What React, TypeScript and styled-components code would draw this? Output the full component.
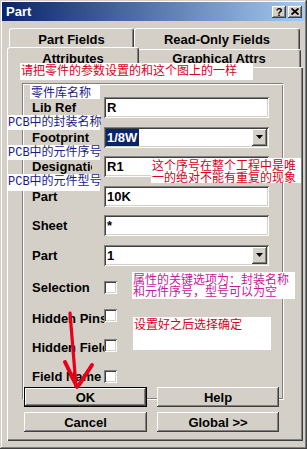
import React from 'react';
import styled, { createGlobalStyle, css } from 'styled-components';

const ui = `"Liberation Sans", Arial, sans-serif`;
const cjk = `"Noto Sans CJK SC", "Liberation Sans", sans-serif`;
const mixed = `"Liberation Mono", "Noto Sans CJK SC", monospace`;

const GlobalStyle = createGlobalStyle`
  html, body {
    margin: 0;
    padding: 0;
    background: #d4d0c8;
  }
  body {
    font-family: ${ui};
  }
`;

const Window = styled.div`
  position: relative;
  width: 307px;
  height: 449px;
  box-sizing: border-box;
  padding: 2px;
  background: #d4d0c8;
  box-shadow: inset -1px -1px #404040, inset 1px 1px #d4d0c8,
    inset -2px -2px #808080, inset 2px 2px #fff;
  display: flex;
  flex-direction: column;
  overflow: hidden;
`;

const TitleBar = styled.div`
  height: 19px;
  flex: none;
  display: flex;
  align-items: center;
  padding: 0 3px 0 4px;
  background: linear-gradient(90deg, #0a246a, #a6caf0);
  color: #fff;
  font: bold 13px ${ui};
`;

const Caption = styled.span`
  flex: 1;
`;

const CaptionButton = styled.div`
  width: 14px;
  height: 12px;
  margin-left: 2px;
  display: flex;
  align-items: center;
  justify-content: center;
  background: #d4d0c8;
  box-shadow: inset -1px -1px #404040, inset 1px 1px #fff, inset -2px -2px #808080;
  color: #000;
  font: bold 11px/12px ${ui};
`;

const Body = styled.div`
  flex: 1;
  display: flex;
  flex-direction: column;
  padding: 7px 2px 6px 5px;
`;

const TabRow = styled.div<{ $h: number }>`
  display: flex;
  height: ${(p) => p.$h}px;
  padding: 0 2px;
  flex: none;
`;

const Tab = styled.div<{ $w: number; $active?: boolean }>`
  box-sizing: border-box;
  width: ${(p) => p.$w}px;
  flex: none;
  display: flex;
  align-items: center;
  justify-content: center;
  background: #d4d0c8;
  border-top: 1px solid #fff;
  border-left: 1px solid #fff;
  border-right: 1px solid #404040;
  box-shadow: inset -1px 0 #808080;
  border-radius: 3px 3px 0 0;
  font: bold 13px ${ui};
  color: #000;
  ${(p) =>
    p.$active &&
    css`
      position: relative;
      z-index: 1;
      width: ${p.$w + 4}px;
      margin: -2px -2px -1px;
    `}
`;

const TabPage = styled.div`
  flex: 1;
  display: flex;
  flex-direction: column;
  padding: 16px 19px 0 15px;
  box-shadow: inset 1px 1px #fff, inset -1px -1px #404040, inset -2px -2px #808080;
`;

const GroupBox = styled.div`
  box-sizing: border-box;
  height: 317px;
  padding: 13px 12px 0 9px;
  border: 1px solid;
  border-color: #808080 #fff #fff #808080;
  box-shadow: inset 1px 1px #fff, inset -1px -1px #808080;
`;

const FieldGrid = styled.div`
  display: grid;
  grid-template-columns: 72px 165px;
  grid-auto-rows: 21px;
  row-gap: 8.5px;
`;

const FieldLabel = styled.div<{ $clip: number }>`
  max-width: ${(p) => p.$clip}px;
  overflow: hidden;
  white-space: nowrap;
  font: bold 13px/21px ${ui};
  color: #000;
`;

const TextBox = styled.div`
  box-sizing: border-box;
  height: 21px;
  display: flex;
  align-items: center;
  padding: 0 3px;
  background: #fff;
  box-shadow: inset 1px 1px #808080, inset -1px -1px #fff, inset 2px 2px #404040,
    inset -2px -2px #d4d0c8;
  font: bold 13px ${ui};
  color: #000;
`;

const ComboBox = styled(TextBox)`
  padding: 2px 2px 2px 2px;
`;

const ComboText = styled.span<{ $selected?: boolean }>`
  height: 17px;
  line-height: 17px;
  padding: 0 2px 0 1px;
  ${(p) =>
    p.$selected &&
    css`
      background: #0a246a;
      color: #fff;
    `}
`;

const DropButton = styled.div`
  margin-left: auto;
  width: 15px;
  height: 17px;
  display: flex;
  align-items: center;
  justify-content: center;
  background: #d4d0c8;
  box-shadow: inset -1px -1px #404040, inset 1px 1px #fff, inset -2px -2px #808080;
`;

const CheckRow = styled.div<{ $h: number }>`
  display: flex;
  align-items: center;
  height: ${(p) => p.$h}px;
`;

const CheckList = styled.div`
  margin-top: 6px;
`;

const CheckLabel = styled.div`
  width: 72px;
  flex: none;
  overflow: hidden;
  white-space: nowrap;
  font: bold 13px/15px ${ui};
  color: #000;
`;

const CheckBox = styled.div<{ $lift: number }>`
  width: 13px;
  height: 13px;
  flex: none;
  margin-bottom: ${(p) => p.$lift * 2}px;
  background: #fff;
  box-shadow: inset 1px 1px #808080, inset -1px -1px #fff, inset 2px 2px #404040,
    inset -2px -2px #d4d0c8;
`;

const ButtonGrid = styled.div`
  display: grid;
  grid-template-columns: 123px 122px;
  grid-auto-rows: 20px;
  column-gap: 10px;
  row-gap: 5px;
  margin: -13px 0 0 2px;
`;

const Button = styled.button<{ $default?: boolean }>`
  box-sizing: border-box;
  margin: 0;
  padding: 0;
  border: none;
  background: #d4d0c8;
  font: bold 13px ${ui};
  color: #000;
  box-shadow: inset -1px -1px #404040, inset 1px 1px #fff, inset -2px -2px #808080;
  ${(p) =>
    p.$default &&
    css`
      box-shadow: inset 0 0 0 1px #000, inset -2px -2px #404040, inset 2px 2px #fff,
        inset -3px -3px #808080;
    `}
`;

const Note = styled.div<{
  $x: number;
  $y: number;
  $w: number;
  $h: number;
  $color: string;
  $lh?: number;
  $mono?: boolean;
}>`
  position: absolute;
  z-index: 2;
  left: ${(p) => p.$x}px;
  top: ${(p) => p.$y}px;
  width: ${(p) => p.$w}px;
  height: ${(p) => p.$h}px;
  box-sizing: border-box;
  padding: 1px 0 0 1px;
  background: #fff;
  color: ${(p) => p.$color};
  font-family: ${(p) => (p.$mono ? mixed : cjk)};
  font-size: 12px;
  line-height: ${(p) => p.$lh ?? 12}px;
  white-space: nowrap;
`;

const Arrow = styled.svg`
  position: absolute;
  z-index: 3;
  left: 58px;
  top: 305px;
`;

const fields = [
  { label: 'Lib Ref', value: 'R' },
  { label: 'Footprint', value: '1/8W', combo: true, selected: true },
  { label: 'Designation', value: 'R1' },
  { label: 'Part', value: '10K' },
  { label: 'Sheet', value: '*' },
  { label: 'Part', value: '1', combo: true },
];

const checks = [
  { label: 'Selection', h: 32, lift: 0 },
  { label: 'Hidden Pins', h: 30, lift: 3 },
  { label: 'Hidden Fields', h: 28, lift: 2 },
  { label: 'Field Name', h: 30, lift: 0 },
];

const BLUE = '#1a1a8c';
const RED = '#d6001c';
const PINK = '#c8189c';

export default function App() {
  return (
    <Window>
      <GlobalStyle />
      <TitleBar>
        <Caption>Part</Caption>
        <CaptionButton>?</CaptionButton>
        <CaptionButton>
          <svg width="8" height="7" viewBox="0 0 8 7">
            <path d="M0.5 0.5 L7.5 6.5 M7.5 0.5 L0.5 6.5" stroke="#000" strokeWidth="1.8" />
          </svg>
        </CaptionButton>
      </TitleBar>
      <Body>
        <TabRow $h={21}>
          <Tab $w={125}>Part Fields</Tab>
          <Tab $w={166}>Read-Only Fields</Tab>
        </TabRow>
        <TabRow $h={18}>
          <Tab $w={128} $active>
            Attributes
          </Tab>
          <Tab $w={164}>Graphical Attrs</Tab>
        </TabRow>
        <TabPage>
          <GroupBox>
            <FieldGrid>
              {fields.map((f, i) => (
                <React.Fragment key={i}>
                  <FieldLabel $clip={60}>{f.label}</FieldLabel>
                  {f.combo ? (
                    <ComboBox>
                      <ComboText $selected={f.selected}>{f.value}</ComboText>
                      <DropButton>
                        <svg width="7" height="4" viewBox="0 0 7 4">
                          <path d="M0 0 H7 L3.5 4 Z" fill="#000" />
                        </svg>
                      </DropButton>
                    </ComboBox>
                  ) : (
                    <TextBox>{f.value}</TextBox>
                  )}
                </React.Fragment>
              ))}
            </FieldGrid>
            <CheckList>
              {checks.map((c) => (
                <CheckRow key={c.label} $h={c.h}>
                  <CheckLabel>{c.label}</CheckLabel>
                  <CheckBox $lift={c.lift} />
                </CheckRow>
              ))}
            </CheckList>
          </GroupBox>
          <ButtonGrid>
            <Button $default>OK</Button>
            <Button>Help</Button>
            <Button>Cancel</Button>
            <Button>Global &gt;&gt;</Button>
          </ButtonGrid>
        </TabPage>
      </Body>

      <Note $x={20} $y={63} $w={233} $h={17} $color={RED}>
        请把零件的参数设置的和这个图上的一样
      </Note>
      <Note $x={30} $y={84} $w={70} $h={15} $lh={14} $color={BLUE}>
        零件库名称
      </Note>
      <Note $x={7} $y={115} $w={93} $h={15} $lh={14} $color={BLUE} $mono>
        PCB中的封装名称
      </Note>
      <Note $x={7} $y={145} $w={93} $h={15} $lh={14} $color={BLUE} $mono>
        PCB中的元件序号
      </Note>
      <Note $x={7} $y={174} $w={93} $h={17} $lh={14} $color={BLUE} $mono>
        PCB中的元件型号
      </Note>
      <Note $x={151} $y={158} $w={150} $h={25} $color={RED}>
        这个序号在整个工程中是唯
        <br />
        一的绝对不能有重复的现象
      </Note>
      <Note $x={132} $y={272} $w={163} $h={27} $color={PINK}>
        属性的关键选项为：封装名称
        <br />
        和元件序号，型号可以为空
      </Note>
      <Note $x={133} $y={317} $w={138} $h={33} $color={RED}>
        设置好之后选择确定
      </Note>

      <Arrow width="40" height="90" viewBox="0 0 40 90">
        <g stroke="#e8001a" strokeLinecap="round" fill="none">
          <path d="M12 8 L18 81" strokeWidth="3.2" />
          <path d="M7 57 L19 82" strokeWidth="4" />
          <path d="M34 60 L21 80" strokeWidth="4" />
        </g>
      </Arrow>
    </Window>
  );
}
